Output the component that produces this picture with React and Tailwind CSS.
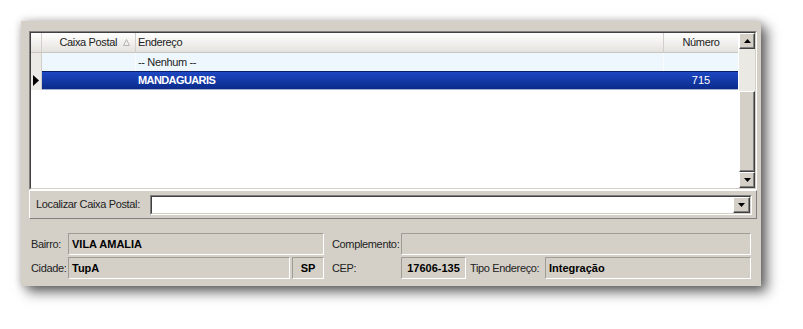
import React from 'react';

const font = { fontFamily: '"Liberation Sans", Arial, sans-serif' };

const sunken = 'border border-t-[#a09d96] border-l-[#a09d96] border-b-white border-r-white';

const TriUp = () => (
    <svg width="7" height="4" viewBox="0 0 7 4"><path d="M3.5 0L7 4H0z" fill="#000" /></svg>
);
const TriDown = () => (
    <svg width="7" height="4" viewBox="0 0 7 4"><path d="M0 0h7L3.5 4z" fill="#000" /></svg>
);

const XpButton = ({ children, className = '' }) => (
    <div className={`flex items-center justify-center bg-[#d4d0c8] border border-t-white border-l-white border-b-[#404040] border-r-[#404040] shadow-[inset_-1px_-1px_0_#808080] ${className}`}>
        {children}
    </div>
);

const Field = ({ className = '', children }) => (
    <div className={`h-[22px] shrink-0 flex items-center px-[3px] font-bold text-black ${sunken} ${className}`}>{children}</div>
);

const Label = ({ className = '', children }) => (
    <div className={`h-[22px] shrink-0 flex items-center text-[#222] tracking-[-0.35px] whitespace-nowrap ${className}`}>{children}</div>
);

const Grid = () => (
    <div className="h-[159px] flex border border-t-[#808080] border-l-[#808080] border-b-white border-r-white">
        <div className="flex-1 flex border border-t-[#404040] border-l-[#404040] border-b-[#d4d0c8] border-r-[#d4d0c8]">
            <div className="flex-1 bg-white flex flex-col">
                {/* header */}
                <div className="h-[20px] flex bg-gradient-to-b from-white to-[#e4e2de] border-b border-[#c9c6c0] text-[#222] tracking-[-0.35px]">
                    <div className="w-[11px] border-r border-[#d2cfca]" />
                    <div className="w-[94px] border-r border-[#d2cfca] flex items-center justify-end pr-[5px] gap-[6px]">
                        <span>Caixa Postal</span>
                        <svg width="7" height="7" viewBox="0 0 7 7"><path d="M3.5 0.5L6.5 6.5H0.5z" fill="#eee" stroke="#b8b5b0" strokeWidth="1" /></svg>
                    </div>
                    <div className="w-[528px] border-r border-[#d2cfca] flex items-center pl-[2px]">Endereço</div>
                    <div className="flex-1 flex items-center justify-center">Número</div>
                </div>
                {/* row 1 */}
                <div className="h-[18px] flex bg-[#eef7fe] text-[#222] tracking-[-0.35px]">
                    <div className="w-[11px] bg-[#eceae6] border-r border-[#d2cfca]" />
                    <div className="w-[94px] border-r border-dotted border-white" />
                    <div className="w-[528px] border-r border-dotted border-white flex items-center pl-[2px]">-- Nenhum --</div>
                    <div className="flex-1" />
                </div>
                {/* row 2 selected */}
                <div className="h-[19px] flex text-white font-bold">
                    <div className="w-[11px] bg-[#eceae6] border-r border-[#d2cfca] flex items-center pl-[2px]">
                        <svg width="6" height="11" viewBox="0 0 6 11"><path d="M0 0L6 5.5L0 11z" fill="#000" /></svg>
                    </div>
                    <div className="flex-1 flex bg-gradient-to-b from-[#1d48c2] to-[#0b2b8c] border-t border-[#0a1f66] border-b border-b-[#a6b0cc]">
                        <div className="w-[94px]" />
                        <div className="w-[528px] flex items-center pl-[2px] tracking-[-0.6px]">MANDAGUARIS</div>
                        <div className="flex-1 flex items-center justify-center font-normal">715</div>
                    </div>
                </div>
                <div className="flex-1" />
            </div>
            {/* scrollbar */}
            <div className="w-[17px] flex flex-col bg-[#d4d0c8] border-l border-white">
                <XpButton className="h-[16px]"><TriUp /></XpButton>
                <div className="h-[42px] bg-[#ebe9e4]" />
                <XpButton className="flex-1" />
                <XpButton className="h-[16px]"><TriDown /></XpButton>
            </div>
        </div>
    </div>
);

export default function App() {
    return (
        <div className="w-[803px] h-[329px] bg-white pt-[21px] pl-[21px] text-[11px] leading-none" style={font}>
            <div className="w-[740px] h-[265px] bg-[#d4d0c8] flex flex-col pl-[8px] pr-[4px] pt-[10px] shadow-[6px_6px_12px_rgba(0,0,0,0.6),0_0_8px_rgba(0,0,0,0.2)]">
                <Grid />
                {/* localizar */}
                <div className="h-[29px] flex items-center border border-t-white border-l-white border-b-[#808080] border-r-[#808080] pl-[6px] pr-[4px]">
                    <div className="w-[114px] text-[#222] tracking-[-0.35px] whitespace-nowrap">Localizar Caixa Postal:</div>
                    <div className="flex-1 h-[20px] flex bg-white border border-t-[#808080] border-l-[#808080] border-b-white border-r-white">
                        <div className="flex-1 flex border border-t-[#404040] border-l-[#404040] border-b-[#d4d0c8] border-r-[#d4d0c8]">
                            <div className="flex-1" />
                            <XpButton className="w-[17px]"><TriDown /></XpButton>
                        </div>
                    </div>
                </div>
                {/* fields */}
                <div className="mt-[14px] flex flex-col gap-[2px] pl-[2px] pr-[6px]">
                    <div className="flex">
                        <Label className="w-[37px]">Bairro:</Label>
                        <Field className="w-[256px]">VILA AMALIA</Field>
                        <Label className="w-[77px] pl-[8px]">Complemento:</Label>
                        <Field className="flex-1 shrink" />
                    </div>
                    <div className="flex">
                        <Label className="w-[37px]">Cidade:</Label>
                        <Field className="w-[222px]">TupA</Field>
                        <Field className="w-[32px] ml-[2px] justify-center">SP</Field>
                        <Label className="w-[77px] pl-[8px]">CEP:</Label>
                        <Field className="w-[65px] justify-center">17606-135</Field>
                        <Label className="w-[79px] pl-[4px]">Tipo Endereço:</Label>
                        <Field className="flex-1 shrink">Integração</Field>
                    </div>
                </div>
            </div>
        </div>
    );
}
